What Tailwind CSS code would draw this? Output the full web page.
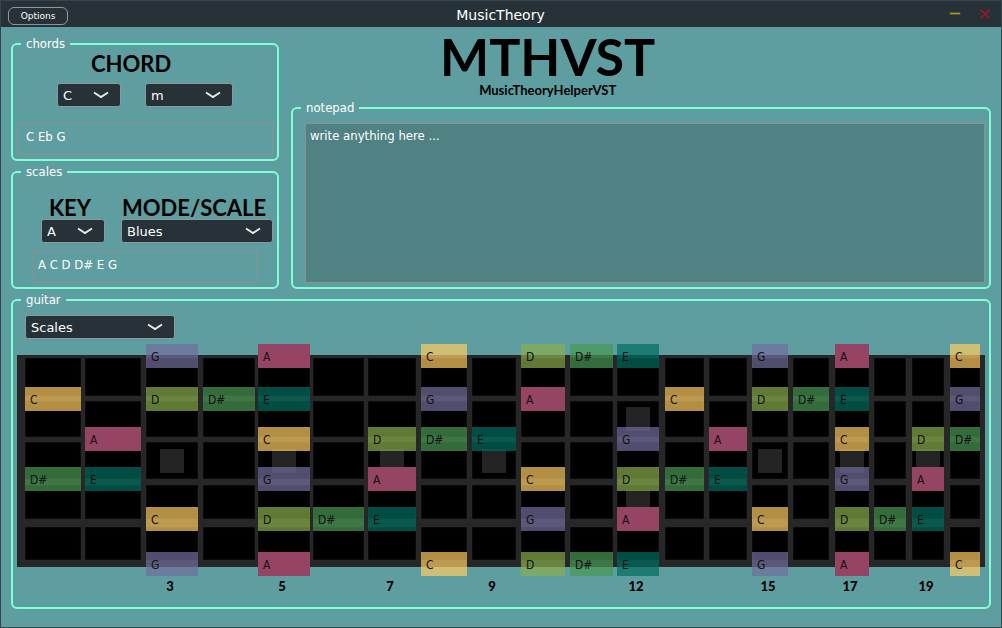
<!DOCTYPE html>
<html lang="en">
<head>
<meta charset="utf-8">
<meta name="viewport" content="width=device-width, initial-scale=1">
<title>MusicTheory</title>
<script src="https://cdn.jsdelivr.net/npm/@tailwindcss/browser@4"></script>
</head>
<body class="flex min-h-screen flex-col border border-[#37444b] bg-[#5f9ea0] font-['DejaVu_Sans',sans-serif] text-white">

<header class="grid h-[26px] grid-cols-3 items-center bg-[#263238] pr-2 pl-[7px]">
  <button type="button" class="mt-1 h-[18px] w-15 rounded-md border border-[#8e989b] text-[9px] leading-4">Options</button>
  <h1 class="mt-0.5 text-center text-sm leading-5">MusicTheory</h1>
  <div class="flex items-center justify-end gap-3.5">
    <button type="button" aria-label="Minimise" class="flex h-4 w-4 items-center justify-center">
      <svg class="h-3 w-3" viewBox="0 0 12 12" fill="none"><path d="M.5 5.5h11" stroke="#5d5528" stroke-width="3"/><path d="M1 5.5h10" stroke="#b59418"/></svg>
    </button>
    <button type="button" aria-label="Close" class="flex h-4 w-4 items-center justify-center">
      <svg class="h-3 w-3" viewBox="0 0 12 12" fill="none"><path d="M1.5 1.5l9 9M10.500 1.500l-9 9" stroke="#b5121a" stroke-width="1.300"/></svg>
    </button>
  </div>
</header>

<main class="flex flex-col gap-[3px] px-2.5 pt-[9px] pb-4">
  <div class="flex gap-3">
    <div class="flex w-[268px] shrink-0 flex-col gap-[3px]">
      <fieldset class="rounded-md border-2 border-[#7fffd4] pb-1">
        <legend class="ml-2 px-[5px] font-['DejaVu_Sans_Condensed','DejaVu_Sans',sans-serif] text-[13px] leading-4">chords</legend>
        <h2 class="pl-[78px] font-[Lato,sans-serif] text-[22px] leading-6 font-bold text-black">CHORD</h2>
        <div class="mt-[7px] flex gap-6 pl-11">
          <div class="relative w-16">
            <select aria-label="Chord root" class="block h-6 w-full appearance-none rounded-[3px] border border-[#8e989b] bg-[#263238] px-[5px] pt-px text-[13px] leading-5"><option>C</option></select>
            <svg class="pointer-events-none absolute top-2 right-3 h-2 w-4" viewBox="0 0 16 8" fill="none"><path d="M1 1.500L8 6l7-4.500" stroke="#e8eaeb" stroke-width="2"/></svg>
          </div>
          <div class="relative w-22">
            <select aria-label="Chord quality" class="block h-6 w-full appearance-none rounded-[3px] border border-[#8e989b] bg-[#263238] px-[5px] pt-px text-[13px] leading-5"><option>m</option></select>
            <svg class="pointer-events-none absolute top-2 right-3 h-2 w-4" viewBox="0 0 16 8" fill="none"><path d="M1 1.500L8 6l7-4.500" stroke="#e8eaeb" stroke-width="2"/></svg>
          </div>
        </div>
        <div class="mx-1 mt-4 flex">
          <input aria-label="Chord notes" readonly value="C Eb G" class="h-8 w-full border border-[#8e8e93] px-2 pt-1 pb-2.5 font-['DejaVu_Sans_Condensed','DejaVu_Sans',sans-serif] text-[13px] leading-4">
        </div>
      </fieldset>

      <fieldset class="rounded-md border-2 border-[#7fffd4] pb-1">
        <legend class="ml-2 px-[5px] font-['DejaVu_Sans_Condensed','DejaVu_Sans',sans-serif] text-[13px] leading-4">scales</legend>
        <div class="mt-[15px] flex gap-4 pl-7">
          <div class="w-16">
            <h2 class="pt-px pl-2 font-[Lato,sans-serif] text-[22px] leading-[23px] font-bold text-black">KEY</h2>
            <div class="relative">
              <select aria-label="Key" class="block h-6 w-full appearance-none rounded-[3px] border border-[#8e989b] bg-[#263238] px-[5px] pt-px text-[13px] leading-5"><option>A</option></select>
              <svg class="pointer-events-none absolute top-2 right-3 h-2 w-4" viewBox="0 0 16 8" fill="none"><path d="M1 1.500L8 6l7-4.500" stroke="#e8eaeb" stroke-width="2"/></svg>
            </div>
          </div>
          <div class="w-38">
            <h2 class="pt-px pl-px font-[Lato,sans-serif] text-[22px] leading-[23px] font-bold whitespace-nowrap text-black">MODE/SCALE</h2>
            <div class="relative">
              <select aria-label="Mode or scale" class="block h-6 w-full appearance-none rounded-[3px] border border-[#8e989b] bg-[#263238] px-[5px] pt-px text-[13px] leading-5"><option>Blues</option></select>
              <svg class="pointer-events-none absolute top-2 right-3 h-2 w-4" viewBox="0 0 16 8" fill="none"><path d="M1 1.500L8 6l7-4.500" stroke="#e8eaeb" stroke-width="2"/></svg>
            </div>
          </div>
        </div>
        <div class="mt-2 mr-5 ml-5 flex">
          <input aria-label="Scale notes" readonly value="A C D D# E G" class="h-8 w-full border border-[#8e8e93] px-1 pt-1 pb-2.5 font-['DejaVu_Sans_Condensed','DejaVu_Sans',sans-serif] text-[13px] leading-4">
        </div>
      </fieldset>
    </div>

    <div class="flex min-w-0 flex-1 flex-col">
      <div class="mb-[2px] ml-[149px] w-fit text-center font-[Lato,sans-serif] font-bold text-black">
        <p class="text-[52px] leading-10">MTHVST</p>
        <p class="mt-1.5 text-[13px] leading-4">MusicTheoryHelperVST</p>
      </div>
      <fieldset class="flex flex-1 flex-col rounded-md border-2 border-[#7fffd4] pr-1 pb-1 pl-3">
        <legend class="-ml-1 px-[5px] font-['DejaVu_Sans_Condensed','DejaVu_Sans',sans-serif] text-[13px] leading-4">notepad</legend>
        <textarea aria-label="Notepad" class="mt-[7px] block w-full flex-1 resize-none border border-[#8e8e93] bg-[#508183] px-1 py-1 font-['DejaVu_Sans_Condensed','DejaVu_Sans',sans-serif] text-[13px] leading-4">write anything here ...</textarea>
      </fieldset>
    </div>
  </div>

  <fieldset class="min-w-0 rounded-md border-2 border-[#7fffd4] px-1 pb-[11px]">
    <legend class="ml-1 px-[5px] font-['DejaVu_Sans_Condensed','DejaVu_Sans',sans-serif] text-[13px] leading-4">guitar</legend>
    <div class="relative mt-[7px] ml-2 w-[150px]">
      <select aria-label="Guitar display" class="block h-6 w-full appearance-none rounded-[3px] border border-[#8e989b] bg-[#263238] px-[5px] pt-px text-[13px] leading-5"><option>Scales</option></select>
      <svg class="pointer-events-none absolute top-2 right-3 h-2 w-4" viewBox="0 0 16 8" fill="none"><path d="M1 1.500L8 6l7-4.500" stroke="#e8eaeb" stroke-width="2"/></svg>
    </div>
    <div class="relative mt-[5px] pt-[11px] pb-[9px]">
      <div id="board" class="grid grid-rows-[3px_38px_5px_36px_5px_37px_6px_34px_8px_33px_7px] bg-[#272727]"></div>
      <div id="notes" class="absolute inset-0 grid grid-rows-[24px_19px_24px_16px_24px_16px_24px_16px_24px_21px_24px]"></div>
    </div>
    <div id="numbers" class="grid font-[Lato,sans-serif] text-[13px] leading-5 font-black text-black"></div>
  </fieldset>
</main>

<script>
  const fretWidths = [56, 56, 52, 52, 52, 51, 48, 46, 44, 44, 43, 42, 39, 38, 36, 36, 34, 32, 32, 30];
  const wireWidths = [8, 4, 5, 5, 3, 3, 4, 5, 5, 5, 5, 4, 6, 5, 5, 5, 6, 5, 6, 6, 5];
  const columns = wireWidths.map((w, i) => `minmax(0,${w}fr)` + (i < 20 ? ` minmax(0,${fretWidths[i]}fr)` : '')).join(' ');

  const strings = [
    { 3: 'G', 5: 'A', 8: 'C', 10: 'D', 11: 'D#', 12: 'E', 15: 'G', 17: 'A', 20: 'C' },
    { 1: 'C', 3: 'D', 4: 'D#', 5: 'E', 8: 'G', 10: 'A', 13: 'C', 15: 'D', 16: 'D#', 17: 'E', 20: 'G' },
    { 2: 'A', 5: 'C', 7: 'D', 8: 'D#', 9: 'E', 12: 'G', 14: 'A', 17: 'C', 19: 'D', 20: 'D#' },
    { 1: 'D#', 2: 'E', 5: 'G', 7: 'A', 10: 'C', 12: 'D', 13: 'D#', 14: 'E', 17: 'G', 19: 'A' },
    { 3: 'C', 5: 'D', 6: 'D#', 7: 'E', 10: 'G', 12: 'A', 15: 'C', 17: 'D', 18: 'D#', 19: 'E' },
    { 3: 'G', 5: 'A', 8: 'C', 10: 'D', 11: 'D#', 12: 'E', 15: 'G', 17: 'A', 20: 'C' }
  ];
  const noteColors = {
    'A': 'bg-[#964463]',
    'C': 'bg-[#ffcc62]/70',
    'D': 'bg-[#89ae4d]/70',
    'D#': 'bg-[#499953]/70',
    'E': 'bg-[#006e60]/70',
    'G': 'bg-[#726d9d]/70'
  };
  const inlays = { 3: [3], 5: [3], 7: [3], 9: [3], 12: [2, 4], 15: [3], 17: [3], 19: [3] };

  const board = document.getElementById('board');
  const notes = document.getElementById('notes');
  const numbers = document.getElementById('numbers');
  for (const layer of [board, notes, numbers]) layer.style.gridTemplateColumns = columns;

  function add(parent, className, fret, row, text) {
    const el = document.createElement('div');
    el.className = className;
    el.style.gridColumn = fret * 2;
    el.style.gridRow = row;
    if (text) el.textContent = text;
    parent.append(el);
    return el;
  }

  for (let fret = 1; fret <= 20; fret++) {
    for (let row = 1; row <= 5; row++) {
      const cell = add(board, 'flex items-center justify-center bg-black shadow-[inset_0_0_2px_#272727]', fret, row * 2);
      if (inlays[fret] && inlays[fret].includes(row)) {
        const dot = document.createElement('span');
        dot.className = 'h-6 w-6 bg-[#242424]';
        cell.append(dot);
      }
    }
    if (inlays[fret]) add(numbers, 'flex justify-center pr-1', fret, 1, String(fret));
  }
  strings.forEach((string, i) => {
    for (const [fret, name] of Object.entries(string)) {
      add(notes, "pl-[5px] pt-px font-['DejaVu_Sans_Condensed','DejaVu_Sans',sans-serif] text-xs leading-6 text-[#111111] " + noteColors[name], Number(fret), i * 2 + 1, name);
    }
  });
</script>
</body>
</html>
